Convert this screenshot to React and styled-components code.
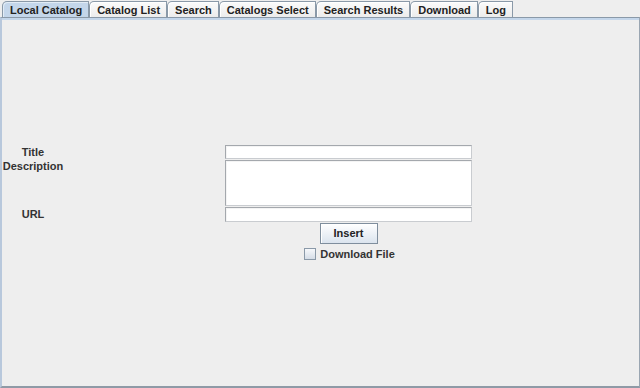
import React from 'react'
import styled, { createGlobalStyle } from 'styled-components'

const GlobalStyle = createGlobalStyle`
  html, body {
    margin: 0;
    padding: 0;
    background: #eeeeee;
  }
  body {
    font-family: "Liberation Sans", Arial, sans-serif;
    font-weight: bold;
    font-size: 11px;
    color: #333333;
  }
`

const WINDOW = styled.div`
  width: 640px;
  height: 388px;
  display: flex;
  flex-direction: column;
  background: #eeeeee;
  box-sizing: border-box;
`

const TABBAR = styled.div`
  display: flex;
  align-items: flex-end;
  padding: 1px 0 0 2px;
  height: 17px;
  box-sizing: border-box;
`

const TAB = styled.div`
  height: 16px;
  box-sizing: border-box;
  padding: 1px 6px 0 7px;
  display: flex;
  align-items: center;
  white-space: nowrap;
  color: #222;
  border: 1px solid #8a99a8;
  border-bottom: none;
  border-top-left-radius: 5px;
  background: ${p => (p.active ? '#c4d6ea' : 'linear-gradient(#fbfbfb, #ececec)')};
  box-shadow: inset 1px 1px 0 ${p => (p.active ? '#e2ecf6' : '#ffffff')};
`

const PANEL = styled.div`
  flex: 1;
  display: flex;
  align-items: center;
  border-top: 1px solid #8a99a8;
  border-left: 2px solid #b8c8dc;
  border-right: 1px solid #9aa6b2;
  border-bottom: 2px solid #8f9aa6;
  box-shadow: inset 0 2px 0 #c4d6ea;
  box-sizing: border-box;
`

const FORM = styled.div`
  display: grid;
  grid-template-columns: 62px 247px;
  grid-template-rows: 15px 47px 15px auto auto;
  column-gap: 161px;
`

const LABEL = styled.div`
  grid-column: 1;
  display: flex;
  justify-content: center;
  align-items: ${p => (p.top ? 'flex-start' : 'center')};
  line-height: 13px;
  white-space: nowrap;
`

const FIELD = styled.div`
  grid-column: 2;
  box-sizing: border-box;
  background: #ffffff;
  border: 1px solid #a4a8ad;
  border-right-color: #c9ccd0;
  border-bottom-color: #c9ccd0;
  box-shadow: inset 1px 1px 0 #f4f4f4;
  margin-bottom: ${p => (p.gap ? '1px' : '0')};
`

const CENTER = styled.div`
  grid-column: 2;
  display: flex;
  justify-content: center;
  align-items: center;
`

const BUTTON = styled.div`
  margin-top: 1px;
  width: 58px;
  height: 21px;
  box-sizing: border-box;
  display: flex;
  align-items: center;
  justify-content: center;
  border: 1px solid #7f8e9d;
  background: linear-gradient(#ffffff, #dbe4ee);
  box-shadow: inset 1px 1px 0 #ffffff;
  color: #222;
`

const CHECKROW = styled.div`
  display: flex;
  align-items: center;
  gap: 4px;
  margin-top: 4px;
  margin-left: 2px;
`

const BOX = styled.div`
  width: 12px;
  height: 12px;
  box-sizing: border-box;
  border: 1px solid #8a99a8;
  background: linear-gradient(#f6f8fb, #d5dde7);
`

const tabs = ['Local Catalog', 'Catalog List', 'Search', 'Catalogs Select', 'Search Results', 'Download', 'Log']

export default function App() {
  return (
    <WINDOW>
      <GlobalStyle />
      <TABBAR>
        {tabs.map((t, i) => (
          <TAB key={t} active={i === 0}>{t}</TAB>
        ))}
      </TABBAR>
      <PANEL>
        <FORM>
          <LABEL>Title</LABEL>
          <FIELD gap />
          <LABEL top>Description</LABEL>
          <FIELD gap />
          <LABEL>URL</LABEL>
          <FIELD />
          <CENTER>
            <BUTTON>Insert</BUTTON>
          </CENTER>
          <CENTER>
            <CHECKROW>
              <BOX />
              <span>Download File</span>
            </CHECKROW>
          </CENTER>
        </FORM>
      </PANEL>
    </WINDOW>
  )
}
